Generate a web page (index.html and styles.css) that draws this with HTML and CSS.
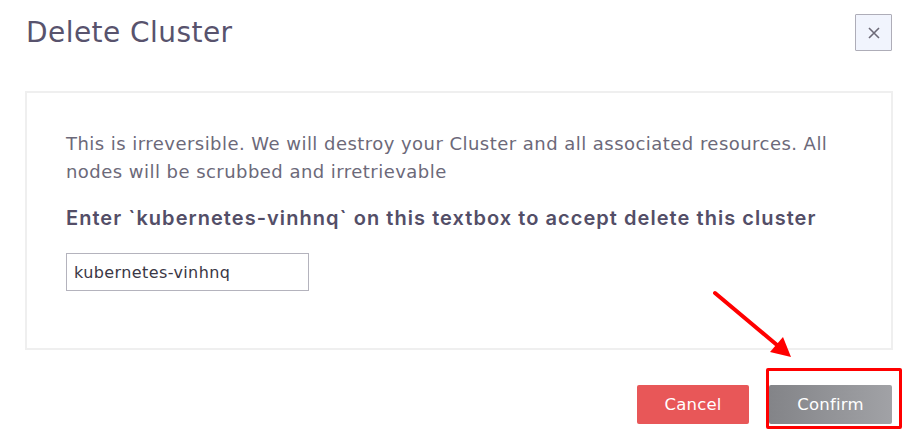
FILE: index.html
```html
<!DOCTYPE html>
<html>
<head>
<meta charset="utf-8">
<link rel="stylesheet" href="styles.css">
</head>
<body>
<div class="modal">
  <div class="modal-header">
    <h1 class="modal-title">Delete Cluster</h1>
    <button class="close-btn" aria-label="Close">
      <svg width="14" height="14" viewBox="0 0 14 14"><path d="M2 2L12 12M12 2L2 12" stroke="#6d6a78" stroke-width="1.6" fill="none"/></svg>
    </button>
  </div>
  <div class="modal-body">
    <p class="warning">This is irreversible. We will destroy your Cluster and all associated resources. All nodes will be scrubbed and irretrievable</p>
    <p class="instruction">Enter `kubernetes-vinhnq` on this textbox to accept delete this cluster</p>
    <input class="confirm-input" type="text" value="kubernetes-vinhnq">
  </div>
  <div class="modal-footer">
    <button class="btn btn-cancel">Cancel</button>
    <button class="btn btn-confirm">Confirm</button>
  </div>
</div>
<div class="highlight-box"></div>
<svg class="arrow" width="921" height="441" viewBox="0 0 921 441">
  <line x1="715" y1="293" x2="777" y2="345" stroke="#ff0000" stroke-width="4" stroke-linecap="round"/>
  <polygon points="791,357 770,352 783,337" fill="#ff0000"/>
</svg>
</body>
</html>
```
FILE: styles.css
```css
html, body {
  margin: 0;
  padding: 0;
  background: #ffffff;
}
body {
  font-family: "DejaVu Sans", "Open Sans", sans-serif;
  width: 921px;
  height: 441px;
  overflow: hidden;
  position: relative;
}
.modal {
  padding: 0 28px 0 25px;
}
.modal-header {
  display: flex;
  justify-content: space-between;
  align-items: center;
  padding: 14px 1px 0 1px;
}
.modal-title {
  margin: 0;
  font-size: 28px;
  font-weight: 400;
  color: #58536d;
  letter-spacing: 0.45px;
  line-height: 37px;
}
.close-btn {
  width: 37px;
  height: 37px;
  box-sizing: border-box;
  border: 1px solid #aeadb8;
  background: #f1f4fd;
  border-radius: 1px;
  display: flex;
  align-items: center;
  justify-content: center;
  padding: 0;
}
.modal-body {
  margin-top: 40px;
  border: 2px solid #efefef;
  padding: 37px 30px 57px 39px;
}
.warning {
  margin: 0;
  font-size: 18px;
  letter-spacing: 0.46px;
  line-height: 28px;
  color: #6c6979;
}
.instruction {
  margin: 18px 0 0 0;
  font-family: "Inter", "DejaVu Sans", sans-serif;
  font-size: 20px;
  line-height: 28px;
  font-weight: 600;
  letter-spacing: 1.05px;
  color: #534e67;
}
.confirm-input {
  display: block;
  margin-top: 21px;
  width: 243px;
  height: 38px;
  box-sizing: border-box;
  border: 1px solid #b4b3bd;
  border-radius: 0;
  padding: 0 7px;
  font-family: "DejaVu Sans", sans-serif;
  font-size: 16px;
  letter-spacing: 0.4px;
  color: #3a3745;
  outline: none;
}
.modal-footer {
  display: flex;
  justify-content: flex-end;
  gap: 20px;
  margin-top: 35px;
  padding-right: 1px;
}
.btn {
  height: 39px;
  border: none;
  border-radius: 2px;
  color: #ffffff;
  font-family: "DejaVu Sans", sans-serif;
  font-size: 16.5px;
  letter-spacing: 0.2px;
  padding: 0;
}
.btn-cancel {
  width: 112px;
  background: #e85758;
}
.btn-confirm {
  width: 123px;
  background: linear-gradient(to right, #838488, #a1a2a6);
}
.highlight-box {
  position: absolute;
  left: 766px;
  top: 368px;
  width: 136px;
  height: 61px;
  box-sizing: border-box;
  border: 3px solid #ff0000;
  border-radius: 2px;
}
.arrow {
  position: absolute;
  left: 0;
  top: 0;
  pointer-events: none;
}
```
